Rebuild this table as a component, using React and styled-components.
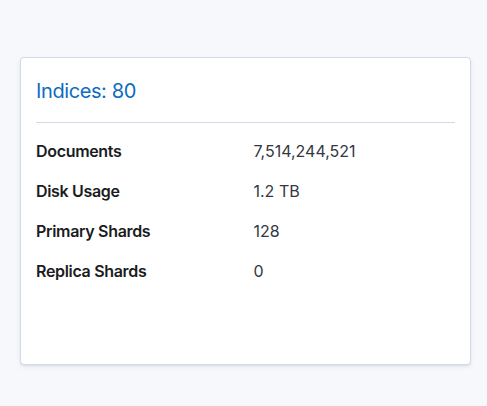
import React from "react";
import styled, { createGlobalStyle } from "styled-components";

const Global = createGlobalStyle`
  html, body { margin: 0; padding: 0; background: #f7f8fc; }
  body { font-family: Inter, "Noto Sans", sans-serif; -webkit-font-smoothing: antialiased; }
`;

const Page = styled.div`
  min-height: 406px;
  box-sizing: border-box;
  padding: 57px 16px 0 20px;
`;

const Card = styled.section`
  box-sizing: border-box;
  width: 451px;
  height: 308px;
  background: #fff;
  border: 1px solid #d3dae6;
  border-radius: 4px;
  box-shadow: 0 1px 2px rgba(0, 0, 0, 0.06), 0 2px 4px rgba(60, 70, 100, 0.08);
  padding: 19px 15px 16px;
  display: flex;
  flex-direction: column;
`;

const Title = styled.h2`
  margin: 0;
  font-size: 20px;
  line-height: 28px;
  font-weight: 400;
  letter-spacing: -0.02em;
  color: #0b6cc0;
`;

const Rule = styled.hr`
  border: 0;
  height: 1px;
  background: #d3dae6;
  margin: 17px 0 8px;
`;

const List = styled.dl`
  margin: 0;
  display: grid;
  grid-template-columns: 1fr 1fr;
  column-gap: 16px;
  grid-auto-rows: 40px;
  align-items: center;
`;

const Label = styled.dt`
  margin: 0;
  font-size: 16px;
  line-height: 20px;
  font-weight: 600;
  letter-spacing: -0.02em;
  color: #1a1c21;
`;

const Value = styled.dd`
  margin: 0;
  font-size: 16px;
  line-height: 20px;
  font-weight: 400;
  color: #343741;
`;

const rows = [
  ["Documents", "7,514,244,521"],
  ["Disk Usage", "1.2 TB"],
  ["Primary Shards", "128"],
  ["Replica Shards", "0"],
];

export default function App() {
  return (
    <>
      <Global />
      <Page>
        <Card>
          <Title>Indices: 80</Title>
          <Rule />
          <List>
            {rows.map(([k, v]) => (
              <React.Fragment key={k}>
                <Label>{k}</Label>
                <Value>{v}</Value>
              </React.Fragment>
            ))}
          </List>
        </Card>
      </Page>
    </>
  );
}
